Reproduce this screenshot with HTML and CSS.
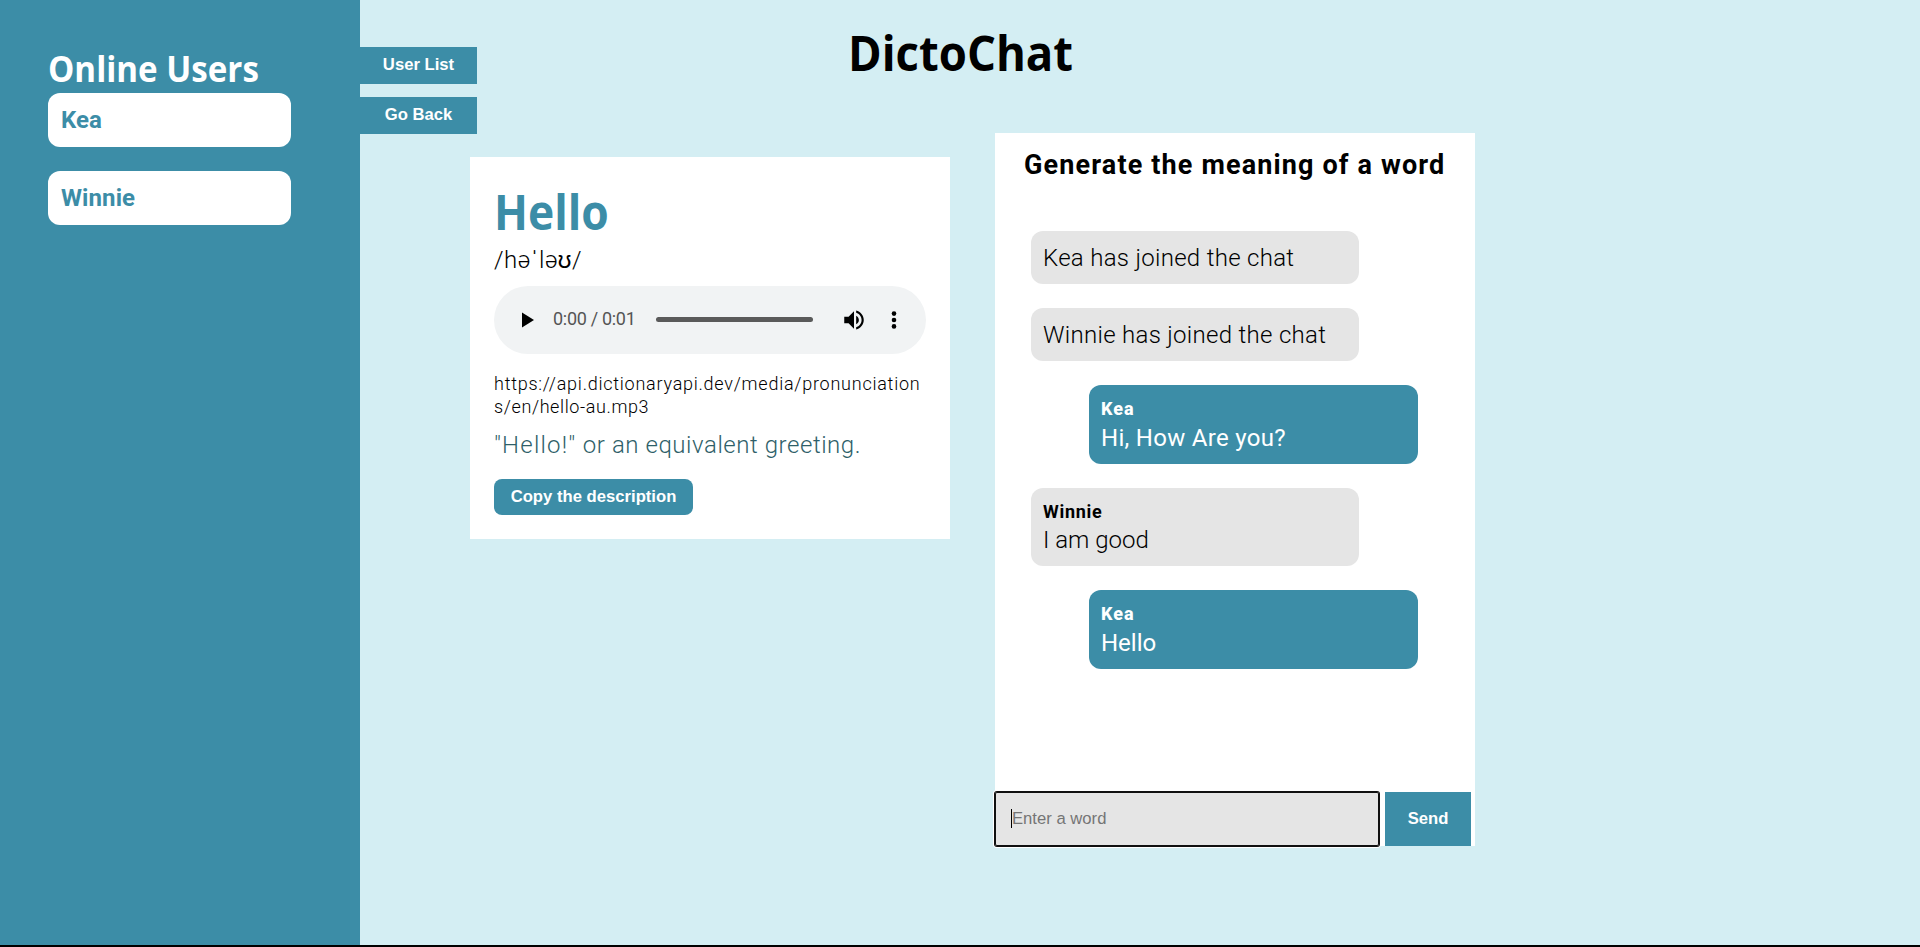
FILE: index.html
```html
<!DOCTYPE html>
<html lang="en">
<head>
<meta charset="utf-8">
<title>DictoChat</title>
<link rel="stylesheet" href="styles.css">
</head>
<body>
<div class="app">
  <aside class="sidebar">
    <h2 class="sidebar-title"><span>Online Users</span></h2>
    <div class="user"><span>Kea</span></div>
    <div class="user winnie"><span>Winnie</span></div>
  </aside>
  <nav class="side-buttons">
    <button class="tab"><span>User List</span></button>
    <button class="tab back"><span>Go Back</span></button>
  </nav>
  <h1 class="brand"><span>DictoChat</span></h1>
  <main class="panels">
    <section class="word-card">
      <h2 class="word"><span>Hello</span></h2>
      <p class="phonetic"><span>/həˈlə<span class="vowel">ʊ</span>/</span></p>
      <div class="player">
        <svg class="play" width="12" height="16" viewBox="0 0 12 16"><path d="M0 .5 12 8 0 15.5z"/></svg>
        <span class="time">0:00 / 0:01</span>
        <span class="track"></span>
        <svg class="volume" width="26" height="26" viewBox="0 0 24 24"><path d="M3 9v6h4l5 5V4L7 9H3zm13.5 3c0-1.77-1.02-3.29-2.5-4.03v8.05c1.48-.73 2.5-2.25 2.5-4.02zM14 3.23v2.06c2.89.86 5 3.54 5 6.71s-2.11 5.85-5 6.71v2.06c4.01-.91 7-4.49 7-8.77s-2.99-7.86-7-8.77z"/></svg>
        <svg class="more" width="6" height="18" viewBox="0 0 6 18"><circle cx="3" cy="2.6" r="2.3"/><circle cx="3" cy="9" r="2.3"/><circle cx="3" cy="15.4" r="2.3"/></svg>
      </div>
      <p class="source"><span class="source-a">https://api.dictionaryapi.dev/media/pronunciation</span><br><span class="source-b">s/en/hello-au.mp3</span></p>
      <p class="meaning"><span><span class="quoted">"Hello!"</span> or an equivalent greeting.</span></p>
      <button class="copy"><span>Copy the description</span></button>
    </section>
    <section class="chat">
      <h3 class="chat-title"><span>Generate the meaning of a word</span></h3>
      <div class="messages">
        <div class="msg joined"><p class="text"><span>Kea has joined the chat</span></p></div>
        <div class="msg joined"><p class="text"><span>Winnie has joined the chat</span></p></div>
        <div class="msg own"><p class="name"><span>Kea</span></p><p class="text how"><span>Hi, How Are you?</span></p></div>
        <div class="msg reply"><p class="name"><span>Winnie</span></p><p class="text good"><span>I am good</span></p></div>
        <div class="msg own"><p class="name"><span>Kea</span></p><p class="text good"><span>Hello</span></p></div>
      </div>
      <div class="composer">
        <div class="field"><i class="caret"></i><span>Enter a word</span></div>
        <button class="send"><span>Send</span></button>
      </div>
    </section>
  </main>
</div>
</body>
</html>
```
FILE: styles.css
```css
* { box-sizing: border-box; margin: 0; padding: 0; }
body { background: #000; font-family: Roboto, sans-serif; }
button { border: 0; background: #3c8da7; color: #fff; font: bold 16.67px/20px "Liberation Sans", sans-serif; }
span { white-space: nowrap; }

.app {
  display: grid;
  grid-template-columns: 360px 117px 1fr;
  grid-template-rows: 133px 1fr;
  width: 1920px; height: 945px;
  background: #d4eef3;
  overflow: hidden;
}
.sidebar { grid-area: 1 / 1 / 3 / 2; background: #3c8da7; padding: 45px 69px 0 48px; }
.sidebar-title { height: 48px; color: #fff; font: 700 36px/48px "Open Sans", sans-serif; }
.sidebar-title span, .brand span, .word span { display: inline-block; transform-origin: 0 50%; }
.sidebar-title span { transform: scaleX(.92); }
.brand span { transform: scaleX(.948); }
.word span { transform: scaleX(.925); }
.user {
  height: 54px; margin-bottom: 24px; padding-left: 13px;
  border-radius: 12px; background: #fff;
  color: #3c8da7; font-size: 24px; font-weight: 700; line-height: 54px; letter-spacing: .1px;
}
.side-buttons { grid-area: 1 / 2 / 2 / 3; display: flex; flex-direction: column; gap: 13px; padding-top: 47px; }
.tab { flex: none; height: 37px; padding-bottom: 2px; }
.brand { grid-area: 1 / 2 / 2 / 4; padding: 22px 0 0 488px; font: 700 48px/61px "Open Sans", sans-serif; }
.panels { grid-area: 2 / 2 / 3 / 4; display: flex; align-items: flex-start; gap: 45px; padding-left: 110px; }

.word-card { width: 480px; height: 382px; margin-top: 24px; padding: 24px; background: #fff; }
.word { height: 62px; color: #3c8da7; font: 700 48px/62px "Open Sans", sans-serif; }
.phonetic { height: 43px; font-size: 24px; font-weight: 300; line-height: 34px; letter-spacing: .5px; }
.vowel { font-family: "Open Sans", sans-serif; line-height: 1; }
.player {
  display: flex; align-items: center; height: 68px;
  padding: 0 0 1px 28px; border-radius: 34px; background: #f1f3f4;
}
.time { width: 103px; margin-left: 19px; padding-bottom: 1px; color: #555; font: 400 18px/24px Roboto, sans-serif; letter-spacing: -.3px; }
.track { width: 157px; height: 5px; border-radius: 3px; background: #5a5a5a; }
.volume { margin-left: 27.5px; }
.more { margin-left: 24px; }
.source { margin-top: 18px; font-size: 18px; font-weight: 300; line-height: 23px; }
.source-a { letter-spacing: .75px; }
.source-b { letter-spacing: .6px; }
.meaning { margin-top: 11px; height: 50px; color: #2f5f69; font-size: 24px; font-weight: 300; line-height: 32px; letter-spacing: .55px; }
.quoted { letter-spacing: 1.2px; }
.copy { width: 199px; height: 36px; border-radius: 8px; }

.chat { display: flex; flex-direction: column; width: 480px; height: 713px; background: #fff; }
.chat-title { padding: 15px 0 0 29px; height: 98px; font-size: 27px; font-weight: 700; line-height: 34px; letter-spacing: 1.14px; }
.messages { display: flex; flex: 1; flex-direction: column; align-items: flex-start; gap: 24px; padding: 0 57px 0 36px; }
.msg { width: 328px; height: 53px; padding: 12px; border-radius: 12px; background: #e5e5e5; }
.joined { padding-top: 13px; }
.own { align-self: flex-end; width: 329px; height: 79px; background: #3c8da7; color: #fff; }
.reply { height: 78px; }
.text { font-size: 24px; font-weight: 300; line-height: 29px; letter-spacing: .3px; }
.own .text { padding-top: 3px; font-weight: 400; }
.name { font-size: 18px; font-weight: 700; line-height: 24px; letter-spacing: .7px; }
.own .name { font-weight: 800; letter-spacing: 1px; }
.reply .text { padding-top: 2px; }
.text.good { letter-spacing: 0; }
.composer { display: flex; height: 54px; gap: 6px; }
.field {
  display: flex; align-items: center; width: 384px; padding: 0 0 1px 16px;
  border-radius: 2px; background: #e5e5e5; color: #757575;
  box-shadow: 0 0 0 1px #101010, inset 0 0 0 1px #101010, 0 0 0 2px #fff;
  font: 16.67px/20px "Liberation Sans", sans-serif;
}
.caret { width: 1px; height: 19px; background: #000; }
.send { width: 86px; padding-bottom: 1px; }
```
